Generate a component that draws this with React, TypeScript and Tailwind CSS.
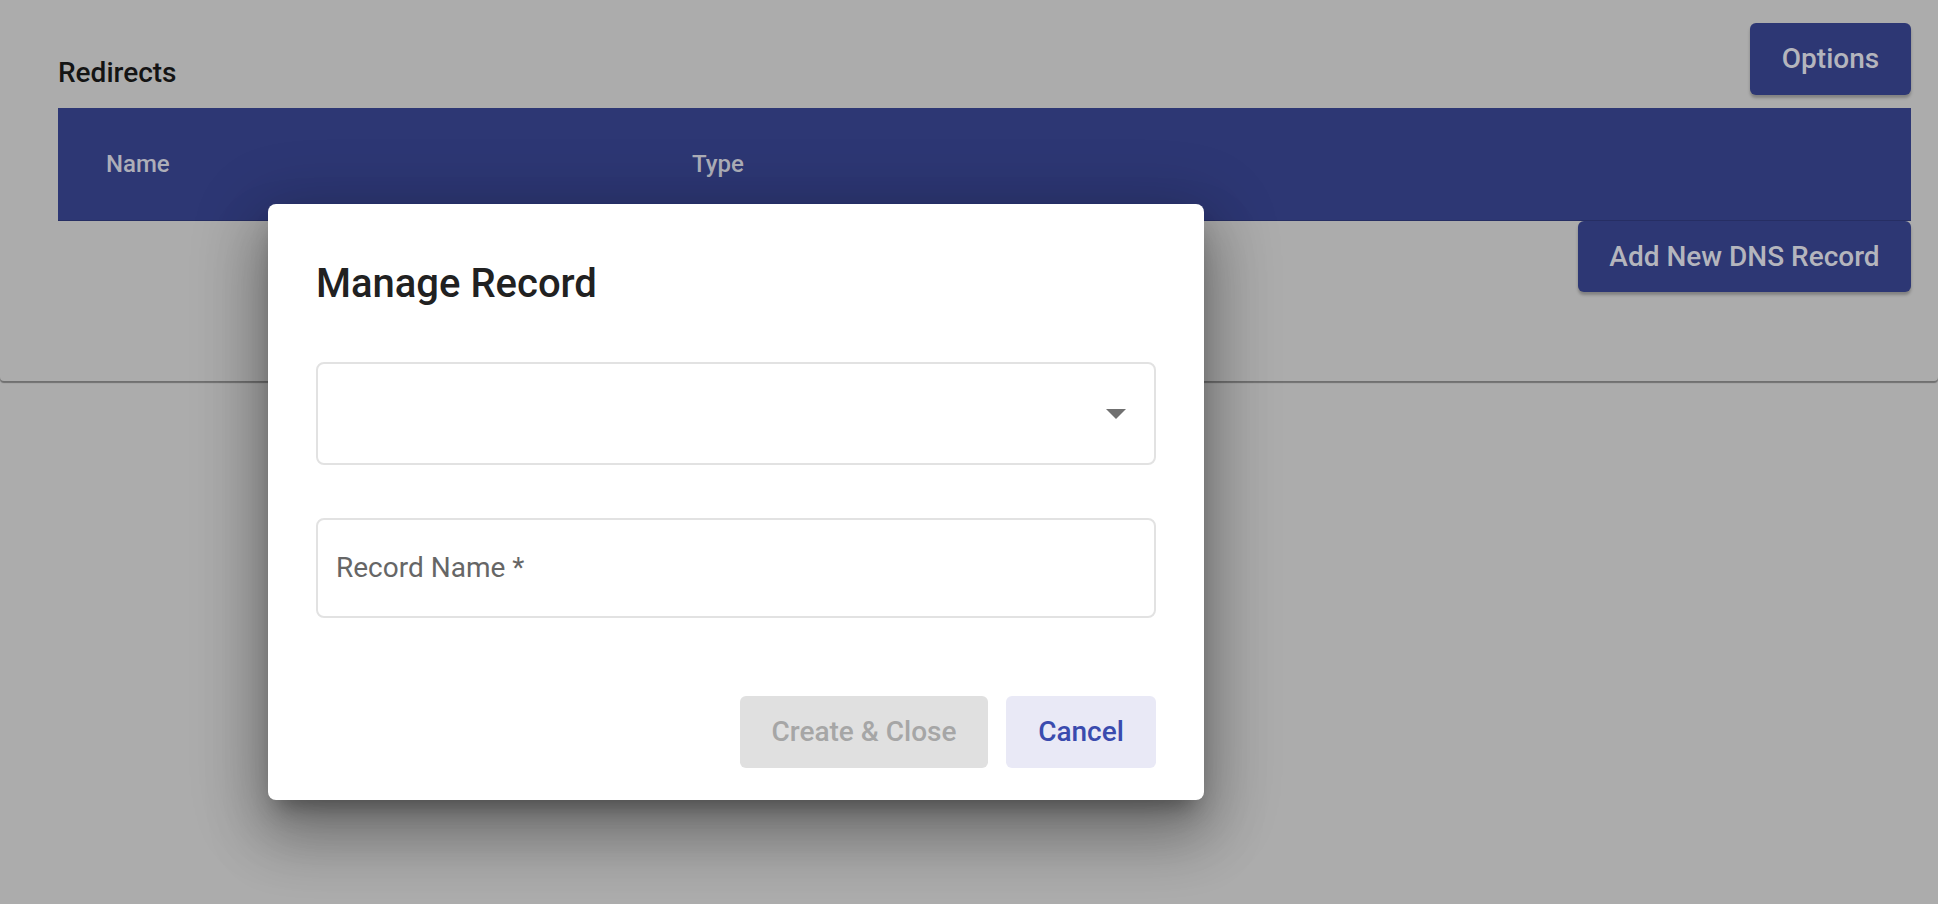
import React from "react";

export default function App() {
  return (
    <div
      className="relative w-full h-[904px] overflow-hidden bg-[#acacac]"
      style={{ fontFamily: "Roboto, 'Liberation Sans', sans-serif" }}
    >
      {/* Page card */}
      <div className="w-full bg-[#acacac] rounded-b-[4px] shadow-[0_2px_1px_rgba(0,0,0,0.35)] pl-[58px] pr-[27px] pt-[23px] pb-[89px]">
        <div className="flex items-center justify-between h-[72px]">
          <div className="text-[28px] font-medium text-[#141414] leading-none mt-[28px]">Redirects</div>
          <button className="h-[72px] w-[161px] rounded-[6px] bg-[#2d3774] text-[#b4b5bd] text-[28px] font-medium shadow-[0_3px_3px_rgba(0,0,0,0.25)]">
            Options
          </button>
        </div>
        <div className="mt-[13px] h-[113px] bg-[#2d3774] border-b border-[#262e63] flex items-center text-[24px] font-medium text-[#adaeb8]">
          <div className="pl-[48px] w-[634px]">Name</div>
          <div>Type</div>
        </div>
        <div className="flex justify-end">
          <button className="h-[71px] w-[333px] rounded-[6px] bg-[#2d3774] text-[#b4b5bd] text-[28px] font-medium shadow-[0_3px_3px_rgba(0,0,0,0.25)]">
            Add New DNS Record
          </button>
        </div>
      </div>

      {/* Dialog */}
      <div className="absolute left-[268px] top-[204px] w-[936px] h-[596px] bg-white rounded-[8px] px-[48px] pt-[58px] shadow-[0_16px_22px_-10px_rgba(0,0,0,0.35),0_36px_57px_5px_rgba(0,0,0,0.22),0_14px_69px_12px_rgba(0,0,0,0.2)]">
        <h2 className="text-[40px] leading-[44px] font-medium text-[#212121]">Manage Record</h2>
        <div className="mt-[56px] h-[103px] rounded-[8px] border-2 border-[#e2e2e2] flex items-center justify-end pr-[28px]">
          <svg width="20" height="10" viewBox="0 0 20 10">
            <path d="M0 0 L20 0 L10 10 Z" fill="#707070" />
          </svg>
        </div>
        <div className="mt-[53px] h-[100px] rounded-[8px] border-2 border-[#e2e2e2] flex items-center pl-[18px]">
          <span className="text-[28px] text-[#666666]">Record Name *</span>
        </div>
        <div className="mt-[78px] flex justify-end gap-[18px]">
          <button className="h-[72px] w-[248px] rounded-[6px] bg-[#e0e0e0] text-[#a6a6a6] text-[28px] font-medium">
            Create &amp; Close
          </button>
          <button className="h-[72px] w-[150px] rounded-[6px] bg-[#e9e9f6] text-[#3a4bae] text-[28px] font-medium">
            Cancel
          </button>
        </div>
      </div>
    </div>
  );
}
